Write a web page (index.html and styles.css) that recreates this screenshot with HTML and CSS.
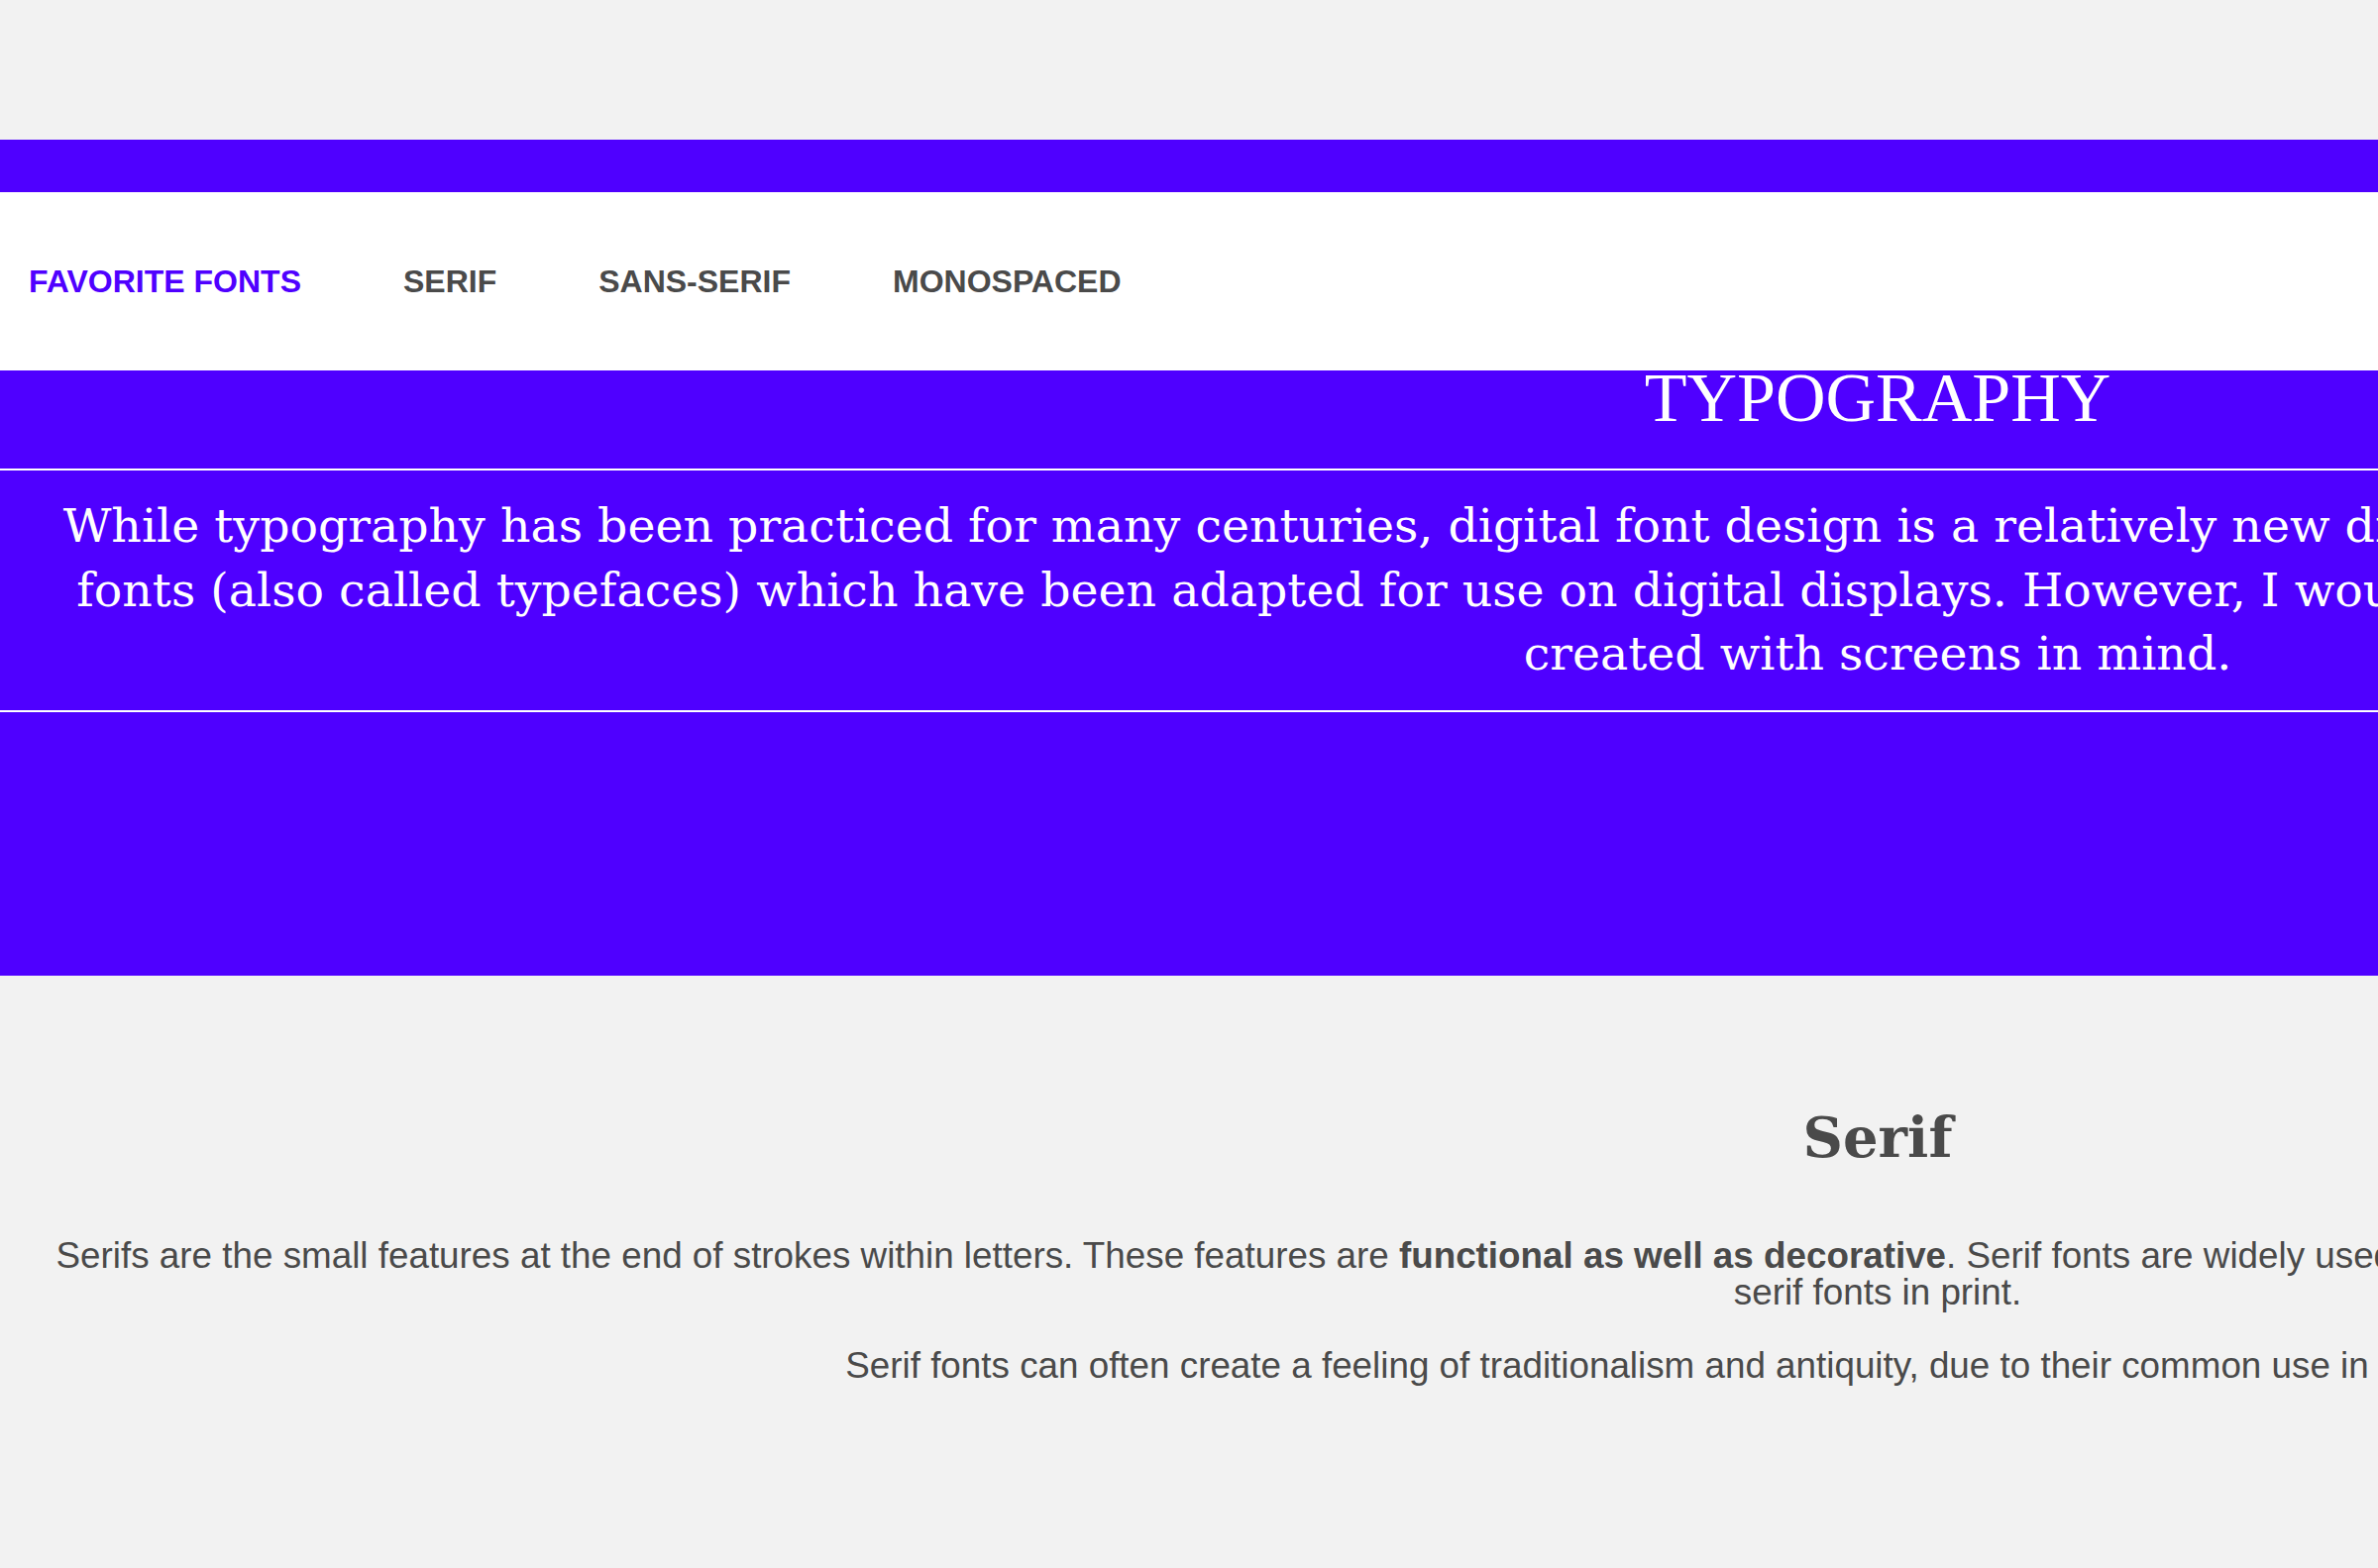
FILE: index.html
```html
<!DOCTYPE html>
<html lang="en">
<head>
<meta charset="utf-8">
<title>Typography</title>
<link rel="stylesheet" href="styles.css">
</head>
<body>
<div class="page">
  <header class="top">
    <nav class="nav">
      <a class="nav-link active" href="#">FAVORITE FONTS</a>
      <a class="nav-link" href="#">SERIF</a>
      <a class="nav-link" href="#">SANS-SERIF</a>
      <a class="nav-link" href="#">MONOSPACED</a>
    </nav>
  </header>
  <section class="hero">
    <h1 class="hero-title">TYPOGRAPHY</h1>
    <hr class="rule">
    <p class="hero-text">While typography has been practiced for many centuries, digital font design is a relatively new discipline. There are some fine classic and old-fashioned<br>fonts (also called typefaces) which have been adapted for use on digital displays. However, I would like to highlight a few of the new fonts, which were<br>created with screens in mind.</p>
    <hr class="rule">
  </section>
  <section class="serif">
    <h2 class="serif-title">Serif</h2>
    <p class="serif-text">Serifs are the small features at the end of strokes within letters. These features are <strong>functional as well as decorative</strong>. Serif fonts are widely used for body text, because they are generally thought to be easier to read than sans-<br>serif fonts in print.</p>
    <p class="serif-text">Serif fonts can often create a feeling of traditionalism and antiquity, due to their common use in printed materials for many years.</p>
  </section>
</div>
</body>
</html>
```
FILE: styles.css
```css
html, body {
  margin: 0;
  padding: 0;
  overflow-x: hidden;
  background: #f2f2f2;
}

.page {
  width: 3790px;
  padding-top: 141px;
}

.top {
  background: #4f00ff;
  padding-top: 53px;
}

.nav {
  background: #ffffff;
  height: 179px;
  display: flex;
  align-items: center;
  gap: 103px;
  padding-left: 29px;
  padding-top: 1px;
}

.nav-link {
  font: bold 32px "Liberation Sans", Arial, sans-serif;
  color: #4a4a4a;
  text-decoration: none;
}

.nav-link.active {
  color: #4f00ff;
}

.hero {
  background: #4f00ff;
  height: 611px;
  color: #ffffff;
  text-align: center;
}

.hero-title {
  margin: 0 0 43px;
  font: normal 70px/56px "Liberation Serif", "Times New Roman", serif;
}

.rule {
  margin: 0;
  border: 0;
  border-top: 2px solid #ffffff;
  height: 0;
}

.hero-text {
  margin: 0;
  padding: 24px 0;
  font: 47.4px/64.5px "DejaVu Serif", serif;
}

.serif {
  padding-top: 130px;
  text-align: center;
  color: #4a4a4a;
}

.serif-title {
  margin: 0 0 69px;
  font: bold 56px "DejaVu Serif", serif;
}

.serif-text {
  margin: 0 0 37px;
  font: 36.8px/1 "Liberation Sans", Arial, sans-serif;
}
```
